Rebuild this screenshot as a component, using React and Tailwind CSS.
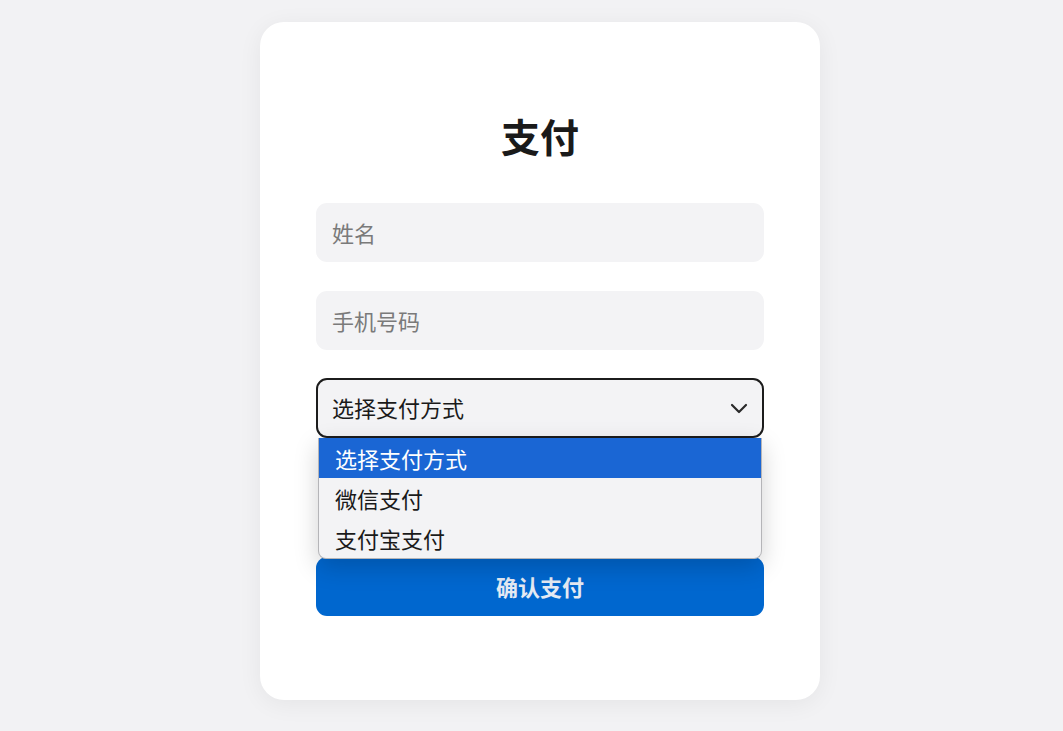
import React from 'react'

const font = { fontFamily: '"Noto Sans CJK SC", "Noto Sans", sans-serif' }

const options = ['选择支付方式', '微信支付', '支付宝支付']

const App = () => {
  return (
    <div className="min-h-screen w-full bg-[#f2f2f4] flex justify-center pt-[22px] pl-[17px]" style={font}>
      <div className="w-[560px] h-[678px] bg-white rounded-[24px] shadow-[0_4px_24px_rgba(0,0,0,0.06)] px-[56px] pt-[90px]">
        <h2 className="h-[47px] leading-[47px] text-center text-[39px] font-bold text-[#1a1a1a]">支付</h2>

        <div className="mt-[44px] flex flex-col">
          <input
            className="h-[59px] w-full rounded-[11px] bg-[#f3f3f5] px-[16px] pb-[2px] text-[22px] text-[#222] placeholder:text-[#7a7a7a] outline-none"
            placeholder="姓名"
          />
          <input
            className="mt-[29px] h-[59px] w-full rounded-[11px] bg-[#f3f3f5] px-[16px] pb-[2px] text-[22px] text-[#222] placeholder:text-[#7a7a7a] outline-none"
            placeholder="手机号码"
          />

          {/* select, shown open */}
          <div className="relative mt-[28px]">
            <div className="h-[60px] w-full rounded-[11px] bg-[#f3f3f5] border-2 border-[#1c1c1c] pl-[14px] pr-[14px] pb-[1px] flex items-center justify-between text-[22px] text-[#1a1a1a]">
              <span>选择支付方式</span>
              <svg width="18" height="12" viewBox="0 0 18 12" fill="none">
                <polyline points="2,3 9,10 16,3" stroke="#2a2a2a" strokeWidth="2.2" strokeLinecap="round" strokeLinejoin="round" />
              </svg>
            </div>
            <div className="absolute left-[2px] right-[2px] top-[60px] z-10 bg-[#f3f3f5] border border-[#b5b5b8] border-t-0 rounded-b-[8px] overflow-hidden shadow-[0_8px_24px_rgba(0,0,0,0.18)]">
              {options.map((o, i) => (
                <div
                  key={o}
                  className={
                    i === 0
                      ? 'h-[40px] flex items-center px-[16px] text-[22px] bg-[#1a66d4] text-white'
                      : 'h-[40px] flex items-center px-[16px] text-[22px] text-[#1a1a1a]'
                  }
                >
                  {o}
                </div>
              ))}
            </div>
          </div>

          <button className="mt-[119px] h-[59px] w-full rounded-[11px] bg-[#0067cf] text-[22px] font-bold text-[#e4eaf3]">
            确认支付
          </button>
        </div>
      </div>
    </div>
  )
}

export default App
